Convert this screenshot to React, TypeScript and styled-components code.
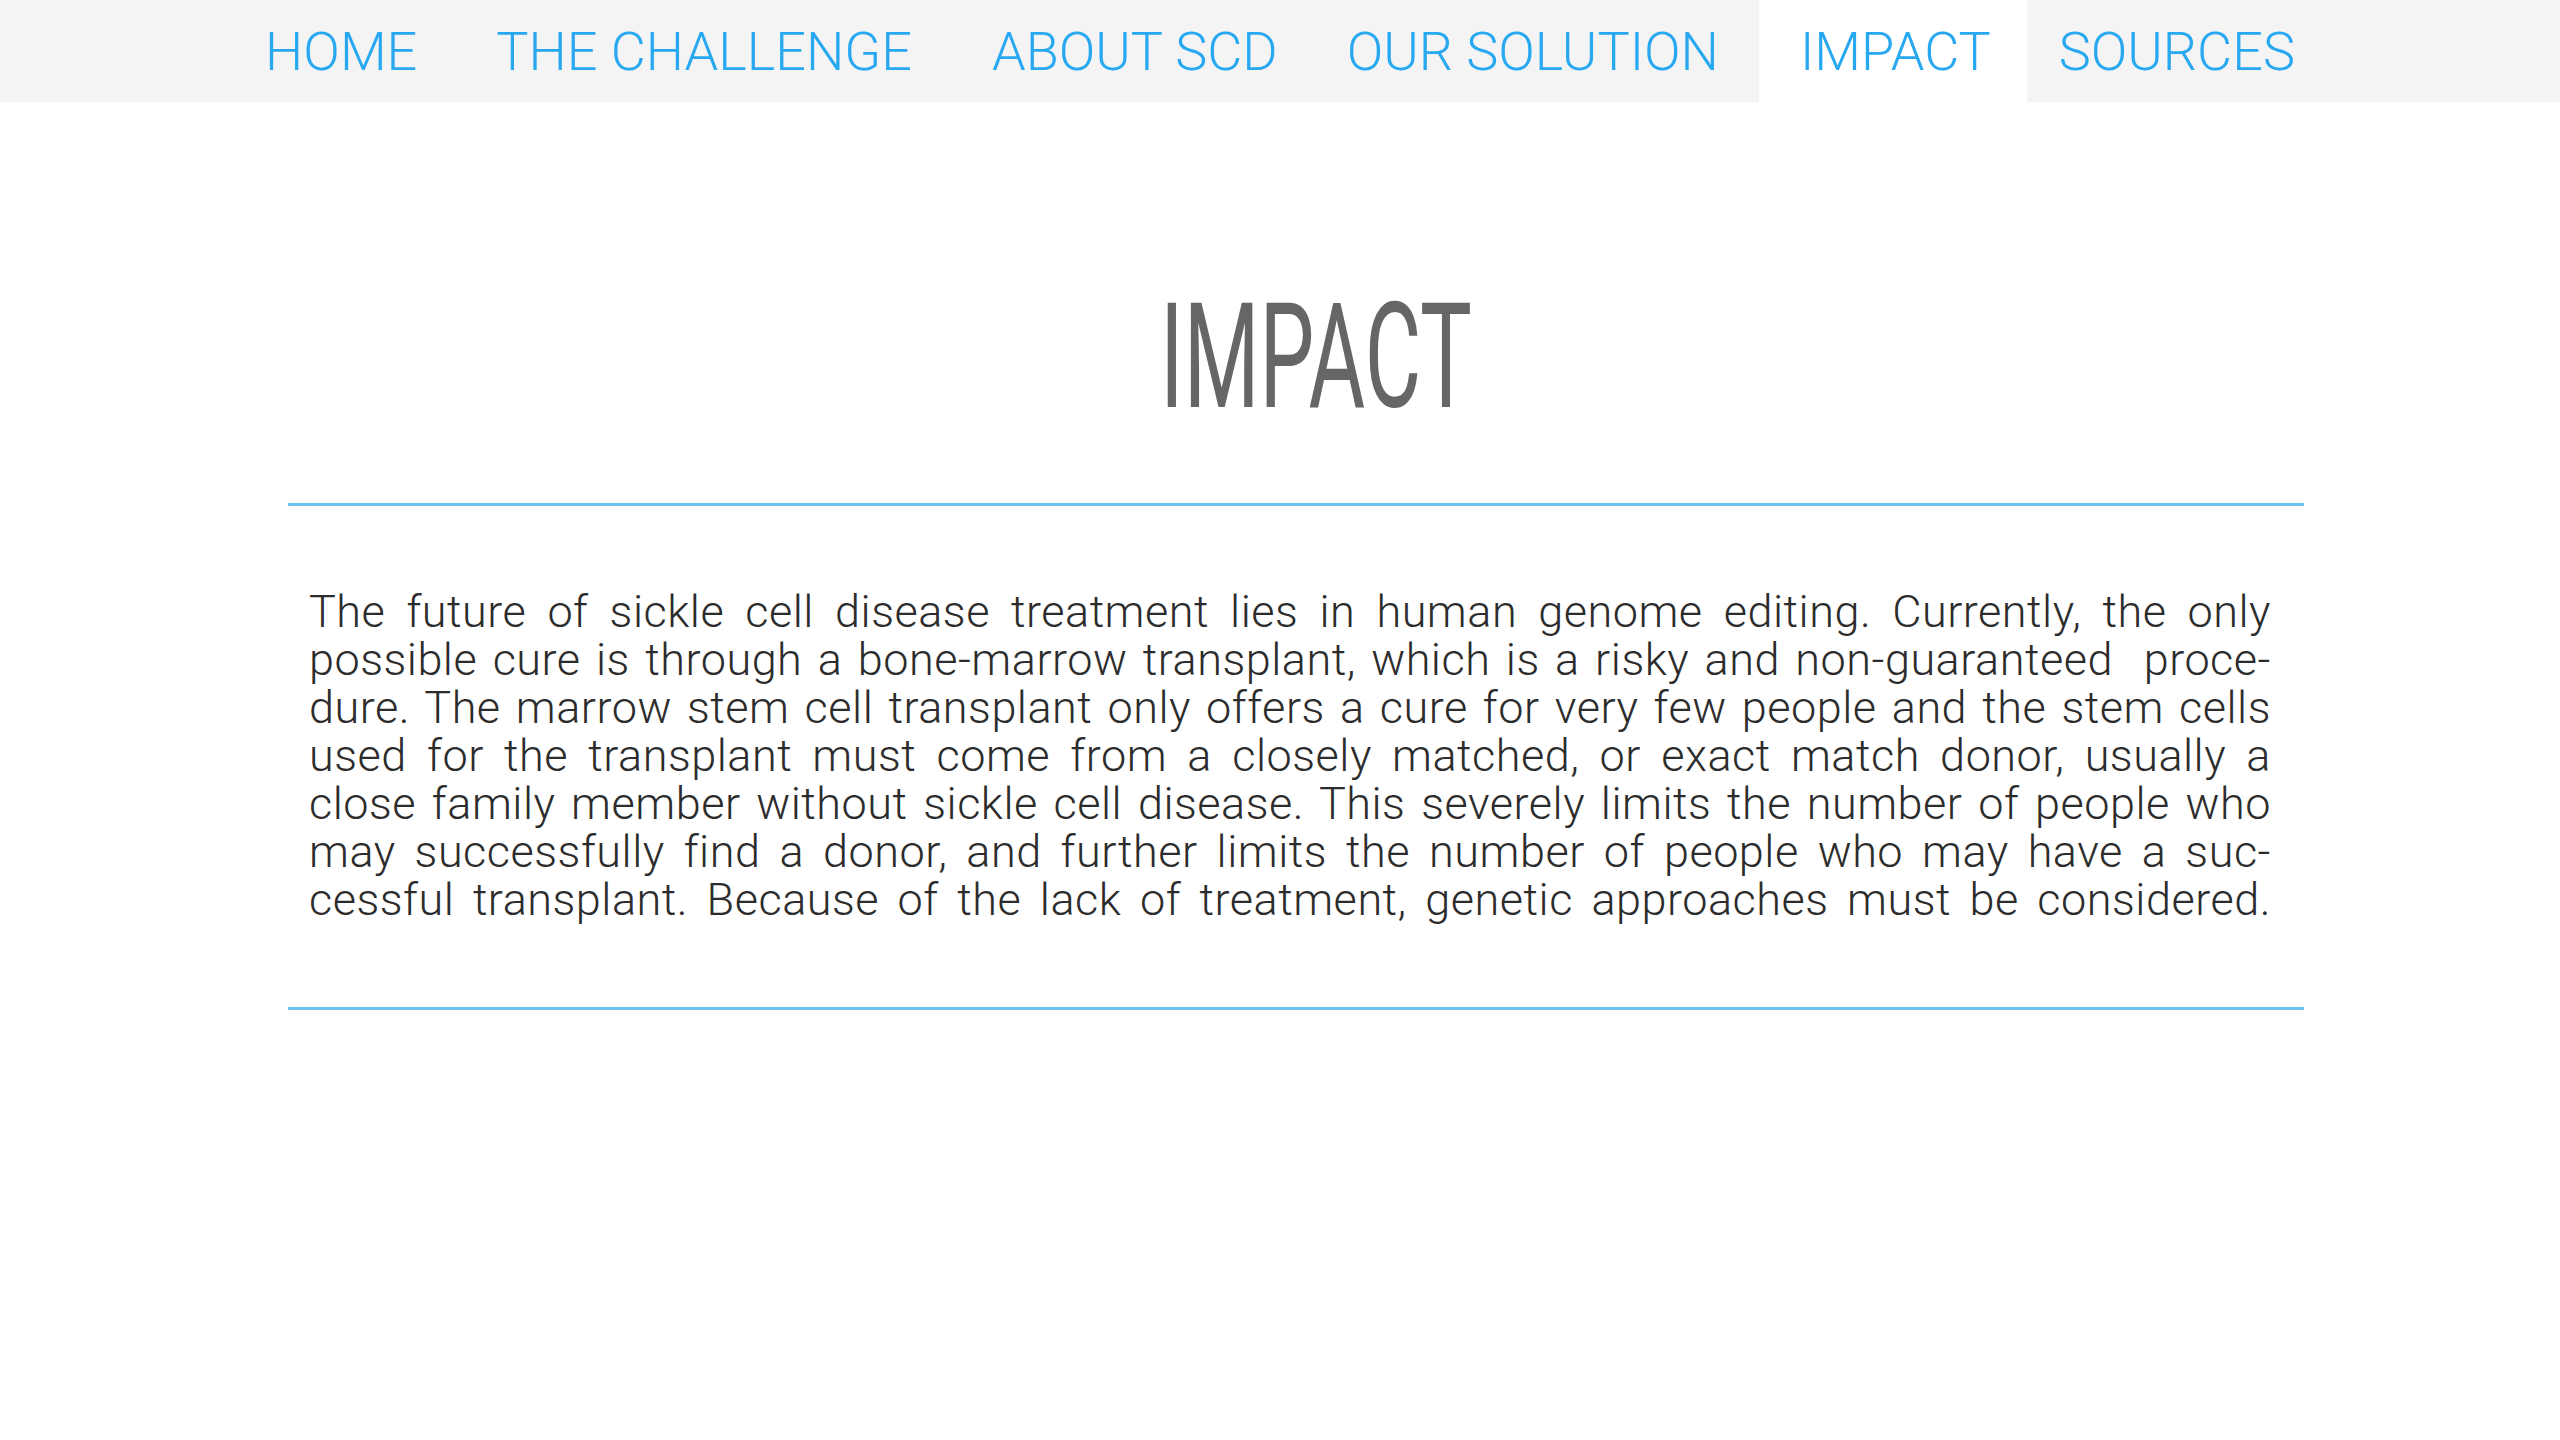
import React from "react";
import styled, { createGlobalStyle } from "styled-components";

const GlobalStyle = createGlobalStyle`
  html, body {
    margin: 0;
    padding: 0;
    background: #ffffff;
  }
  body {
    font-family: Roboto, "Liberation Sans", sans-serif;
  }
`;

const Page = styled.div`
  width: 100%;
  min-height: 1440px;
  background: #ffffff;
`;

const NavBar = styled.nav`
  height: 102px;
  background: #f4f4f4;
  display: flex;
  justify-content: center;
`;

const NavItem = styled.a<{ $active?: boolean; $shift: number }>`
  display: block;
  margin-left: ${(p) => p.$shift}px;
  padding: 2px 36px 0 ${(p) => (p.$active ? 41 : 36)}px;
  line-height: 100px;
  font-family: Roboto, "Liberation Sans", sans-serif;
  font-weight: 300;
  font-size: 54px;
  color: #27a8f0;
  text-decoration: none;
  white-space: nowrap;
  background: ${(p) => (p.$active ? "#ffffff" : "transparent")};
`;

const Main = styled.main`
  width: 2016px;
  margin-left: 288px;
  display: flex;
  flex-direction: column;
`;

const HeadingWrap = styled.div`
  margin-top: 183px;
  display: flex;
  justify-content: center;
  padding-left: 40px;
`;

const Heading = styled.h1`
  margin: 0;
  font-family: Roboto, "Liberation Sans", sans-serif;
  font-weight: 400;
  font-size: 146px;
  line-height: 1;
  color: #666666;
  transform: scaleX(0.595);
  transform-origin: center;
`;

const Rule = styled.hr`
  width: 100%;
  height: 3px;
  border: none;
  margin: 0;
  background: #6cc4f4;
`;

const TopRule = styled(Rule)`
  margin-top: 72px;
`;

const BottomRule = styled(Rule)`
  margin-top: 83px;
`;

const Paragraph = styled.p`
  margin: 82px 0 0;
  padding: 0 33px 0 21px;
  font-family: Roboto, "Liberation Sans", sans-serif;
  font-weight: 300;
  font-size: 45px;
  line-height: 48px;
  letter-spacing: 0.5px;
  color: #2c2c2c;
`;

const Line = styled.span`
  display: block;
  text-align: justify;
  text-align-last: justify;
`;

const navItems: { label: string; shift: number }[] = [
  { label: "HOME", shift: 0 },
  { label: "THE CHALLENGE", shift: 7 },
  { label: "ABOUT SCD", shift: 8 },
  { label: "OUR SOLUTION", shift: -3 },
  { label: "IMPACT", shift: 4 },
  { label: "SOURCES", shift: -4 },
];

const lines = [
  "The future of sickle cell disease treatment lies in human genome editing. Currently, the only",
  "possible cure is through a bone-marrow transplant, which is a risky and non-guaranteed\u00a0 proce-",
  "dure. The marrow stem cell transplant only offers a cure for very few people and the stem cells",
  "used for the transplant must come from a closely matched, or exact match donor, usually a",
  "close family member without sickle cell disease. This severely limits the number of people who",
  "may successfully find a donor, and further limits the number of people who may have a suc-",
  "cessful transplant. Because of the lack of treatment, genetic approaches must be considered.",
];

export default function App() {
  return (
    <Page>
      <GlobalStyle />
      <NavBar>
        {navItems.map((item) => (
          <NavItem
            key={item.label}
            href="#"
            $shift={item.shift}
            $active={item.label === "IMPACT"}
          >
            {item.label}
          </NavItem>
        ))}
      </NavBar>
      <Main>
        <HeadingWrap>
          <Heading>IMPACT</Heading>
        </HeadingWrap>
        <TopRule />
        <Paragraph>
          {lines.map((l, i) => (
            <Line key={i}>{l}</Line>
          ))}
        </Paragraph>
        <BottomRule />
      </Main>
    </Page>
  );
}
